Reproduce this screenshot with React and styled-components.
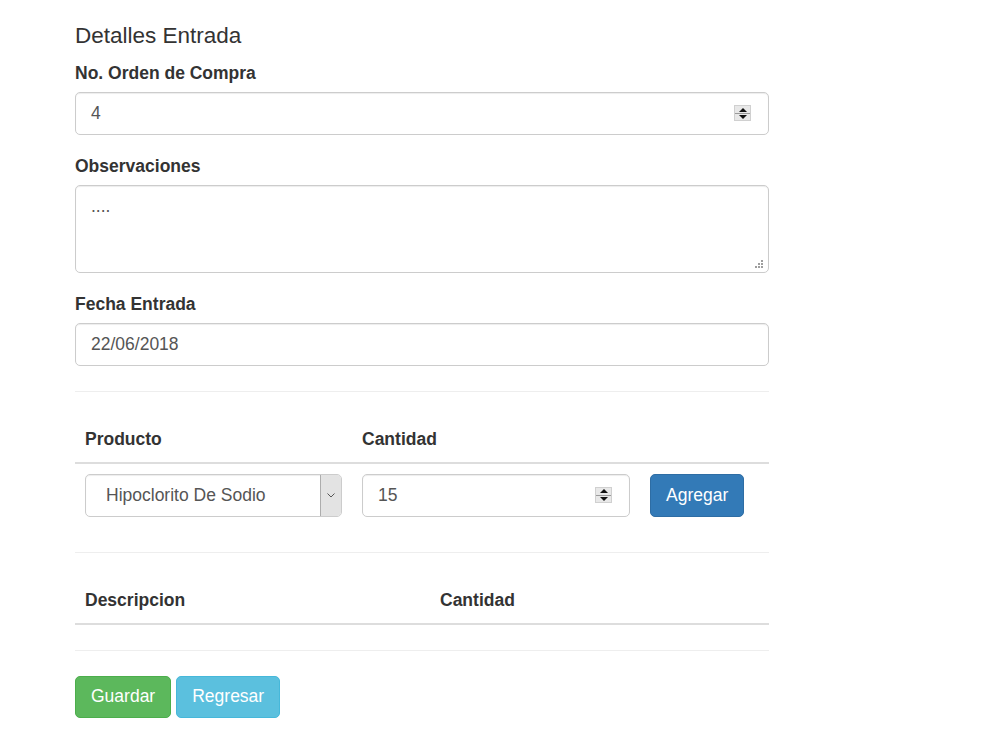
import React from 'react';
import styled, { createGlobalStyle } from 'styled-components';

const GlobalStyle = createGlobalStyle`
  body {
    margin: 0;
    background: #fff;
    font-family: "Liberation Sans", Arial, sans-serif;
    font-size: 17.5px;
    color: #333;
  }
`;

const Page = styled.div`
  width: 694px;
  padding-left: 75px;
`;

const Title = styled.h4`
  margin: 24px 0 12px;
  font-size: 22.5px;
  font-weight: normal;
  line-height: 24.75px;
`;

const FormGroup = styled.div`
  margin-bottom: ${p => (p.last ? 0 : 19)}px;
`;

const Label = styled.label`
  display: block;
  font-weight: bold;
  line-height: 25px;
  margin-bottom: 6.25px;
`;

const Control = styled.div`
  box-sizing: border-box;
  display: flex;
  align-items: ${p => (p.multiline ? 'flex-start' : 'center')};
  position: relative;
  width: 100%;
  height: ${p => p.height || 42.5}px;
  padding: ${p => (p.multiline ? '8px 15px' : '0 15px')};
  border: 1px solid #ccc;
  border-radius: 5px;
  box-shadow: inset 0 1px 1px rgba(0, 0, 0, 0.075);
  color: #555;
  line-height: 25px;
  background: #fff;
`;

const Value = styled.span`
  flex: 1;
`;

const Spinner = styled.span`
  display: flex;
  flex-direction: column;
  width: 17px;
  height: 16px;
  background: #e8e8e8;
  border: 1px solid #d0d0d0;
  box-sizing: border-box;
  margin-right: 2px;
`;

const SpinHalf = styled.span`
  flex: 1;
  display: flex;
  align-items: center;
  justify-content: center;
  border-top: ${p => (p.down ? '1px solid #9a9a9a' : 'none')};
  &::after {
    content: '';
    border-left: 4px solid transparent;
    border-right: 4px solid transparent;
    ${p => (p.down ? 'border-top: 4px solid #111;' : 'border-bottom: 4px solid #111;')}
  }
`;

const Grip = styled.svg`
  position: absolute;
  right: 4px;
  bottom: 3px;
`;

const Rule = styled.hr`
  border: 0;
  border-top: 1px solid #eee;
  margin: 25px 0;
`;

const Table = styled.table`
  width: 100%;
  border-collapse: collapse;
  table-layout: fixed;
`;

const Th = styled.th`
  text-align: left;
  font-weight: bold;
  line-height: 25px;
  padding: 10px;
  border-bottom: 2.5px solid #ddd;
`;

const Td = styled.td`
  padding: 10px;
  vertical-align: top;
`;

const SelectBox = styled.div`
  box-sizing: border-box;
  display: flex;
  align-items: stretch;
  height: 43px;
  border: 1px solid #ccc;
  border-radius: 5px;
  box-shadow: inset 0 1px 1px rgba(0, 0, 0, 0.075);
  color: #555;
  overflow: hidden;
`;

const SelectText = styled.span`
  flex: 1;
  display: flex;
  align-items: center;
  padding-left: 20px;
`;

const SelectArrow = styled.span`
  width: 20px;
  display: flex;
  align-items: center;
  justify-content: center;
  background: #e3e3e3;
  border-left: 1px solid #adadad;
`;

const Button = styled.button`
  box-sizing: border-box;
  height: ${p => p.height || 42.5}px;
  padding: 0 15px;
  font-family: inherit;
  font-size: 17.5px;
  color: #fff;
  border-radius: 5px;
  border: 1px solid ${p => p.border};
  background: ${p => p.bg};
  cursor: pointer;
`;

const Actions = styled.div`
  display: flex;
  gap: 5px;
`;

const NumberSpinner = () => (
  <Spinner>
    <SpinHalf />
    <SpinHalf down />
  </Spinner>
);

export default function App() {
  return (
    <>
      <GlobalStyle />
      <Page>
        <Title>Detalles Entrada</Title>

        <FormGroup>
          <Label>No. Orden de Compra</Label>
          <Control>
            <Value>4</Value>
            <NumberSpinner />
          </Control>
        </FormGroup>

        <FormGroup>
          <Label>Observaciones</Label>
          <Control multiline height={88}>
            <Value>....</Value>
            <Grip width="9" height="9" viewBox="0 0 9 9">
              <g fill="#9e9e9e">
                <rect x="6" y="0" width="2" height="2" />
                <rect x="3" y="3" width="2" height="2" />
                <rect x="6" y="3" width="2" height="2" />
                <rect x="0" y="6" width="2" height="2" />
                <rect x="3" y="6" width="2" height="2" />
                <rect x="6" y="6" width="2" height="2" />
              </g>
            </Grip>
          </Control>
        </FormGroup>

        <FormGroup last>
          <Label>Fecha Entrada</Label>
          <Control>
            <Value>22/06/2018</Value>
          </Control>
        </FormGroup>

        <Rule />

        <Table>
          <colgroup>
            <col style={{ width: 277 }} />
            <col style={{ width: 288 }} />
            <col />
          </colgroup>
          <thead>
            <tr>
              <Th>Producto</Th>
              <Th>Cantidad</Th>
              <Th />
            </tr>
          </thead>
          <tbody>
            <tr>
              <Td>
                <SelectBox>
                  <SelectText>Hipoclorito De Sodio</SelectText>
                  <SelectArrow>
                    <svg width="8" height="5" viewBox="0 0 8 5">
                      <path d="M0.5 0.5 L4 4 L7.5 0.5" fill="none" stroke="#555" strokeWidth="1" />
                    </svg>
                  </SelectArrow>
                </SelectBox>
              </Td>
              <Td>
                <Control height={43}>
                  <Value>15</Value>
                  <NumberSpinner />
                </Control>
              </Td>
              <Td>
                <Button bg="#337ab7" border="#2e6da4" height={43}>Agregar</Button>
              </Td>
            </tr>
          </tbody>
        </Table>

        <Rule />

        <Table>
          <colgroup>
            <col style={{ width: 355 }} />
            <col />
          </colgroup>
          <thead>
            <tr>
              <Th>Descripcion</Th>
              <Th>Cantidad</Th>
            </tr>
          </thead>
        </Table>

        <Rule />

        <Actions>
          <Button bg="#5cb85c" border="#4cae4c">Guardar</Button>
          <Button bg="#5bc0de" border="#46b8da">Regresar</Button>
        </Actions>
      </Page>
    </>
  );
}
